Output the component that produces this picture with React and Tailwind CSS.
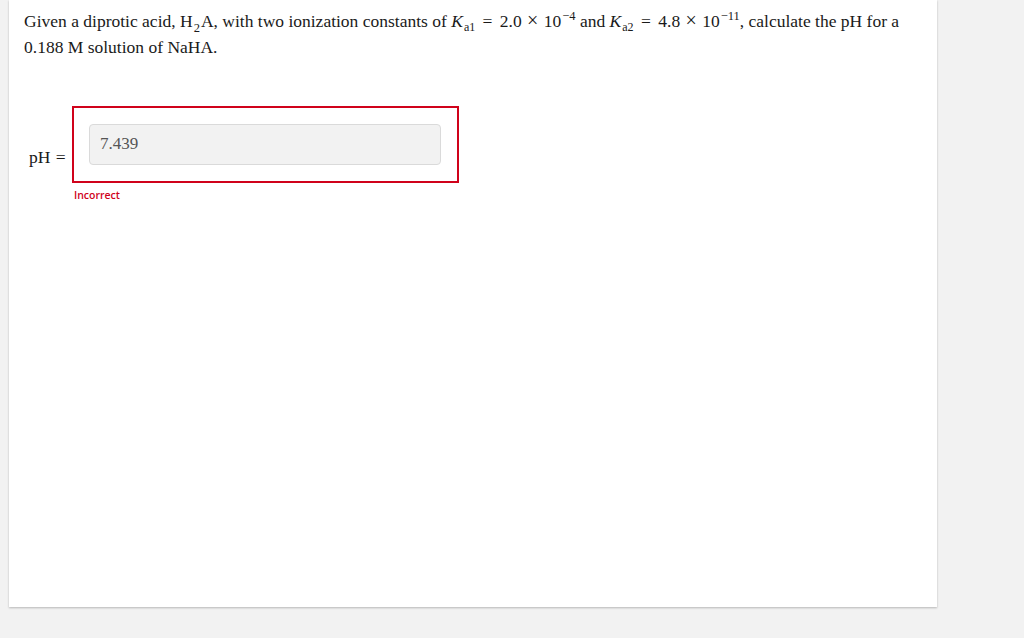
import React from 'react';

const serif = "font-['Liberation_Serif','Times_New_Roman',serif]";

const Ka = ({ sub }) => (
  <span className="whitespace-nowrap">
    <i className="mr-[1px]">K</i>
    <span className="relative top-[4px] text-[12px] leading-none">{sub}</span>
  </span>
);

const Sup = ({ children }) => (
  <span className="relative top-[-7px] ml-[1px] text-[12.5px] leading-none">{children}</span>
);

const Times = () => <span className="mx-[1px] text-[20px] leading-[0]">×</span>;

const App = () => {
  return (
    <div className="min-h-screen bg-[#f2f2f2]">
      <div className="ml-[9px] w-[928px] h-[607px] bg-white shadow-[0_1px_2px_rgba(0,0,0,0.25)] pl-[15px] pt-[8px]">
        <p className={`${serif} text-[17.5px] leading-[26px] text-[#1a1a1a]`}>
          Given a diprotic acid, H<span className="relative top-[5px] mx-[1px] text-[12.5px] leading-none">2</span>A, with two ionization constants of{' '}
          <Ka sub="a1" /> <span className="mx-[3px]">=</span> 2.0 <Times /> 10<Sup>−4</Sup> and{' '}
          <Ka sub="a2" /> <span className="mx-[3px]">=</span> 4.8 <Times /> 10<Sup>−11</Sup>, calculate the pH for a 0.188 M solution of NaHA.
        </p>

        <div className="mt-[46px] flex items-start">
          <span className={`${serif} ml-[5px] mt-[40px] w-[43px] text-[17.5px] leading-[22px] text-[#1a1a1a] whitespace-nowrap`}>
            pH <span className="ml-[1px]">=</span>
          </span>
          <div>
            <div className="w-[387px] h-[77px] border-2 border-[#d0021b] pl-[15px] pt-[16px]">
              <div className={`${serif} w-[352px] h-[41px] rounded-[4px] border border-[#dadada] bg-[#f2f2f2] pl-[10px] pt-[9px] text-[17px] leading-[20px] text-[#555]`}>
                7.439
              </div>
            </div>
            <div className="ml-[2px] mt-[5px] font-['Open_Sans',sans-serif] text-[10.5px] font-semibold text-[#d0021b]">
              Incorrect
            </div>
          </div>
        </div>
      </div>
    </div>
  );
};

export default App;
